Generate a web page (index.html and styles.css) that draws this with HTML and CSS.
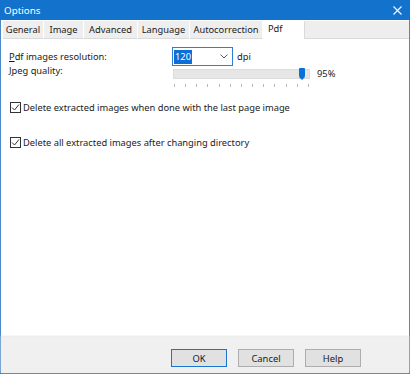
FILE: index.html
```html
<!DOCTYPE html>
<html>
<head>
	<meta charset="UTF-8">
	<title>Options</title>
	<link rel="stylesheet" href="styles.css">
</head>
<body>
	<div class="window">
		<div class="titlebar">
			<span class="title">Options</span>
			<svg class="close" width="9" height="9" viewBox="0 0 9 9"><path d="M0.5 0.5L8.5 8.5M8.5 0.5L0.5 8.5" stroke="#fff" stroke-width="1.1"/></svg>
		</div>
		<div class="tabs">
			<span class="tab t-general">General</span>
			<span class="tab t-image">Image</span>
			<span class="tab t-advanced">Advanced</span>
			<span class="tab t-language">Language</span>
			<span class="tab t-auto">Autocorrection</span>
			<span class="tab selected">Pdf</span>
			<span class="tabfill"></span>
		</div>
		<div class="page">
			<div class="row">
				<span class="label"><u>P</u>df images resolution:</span>
				<span class="combo"><span class="sel">120</span>
					<svg class="chev" width="8" height="5" viewBox="0 0 8 5"><path d="M0.5 0.5L4 4L7.5 0.5" fill="none" stroke="#555" stroke-width="1"/></svg>
				</span>
				<span class="unit">dpi</span>
			</div>
			<div class="row slider-row">
				<span class="label"><u>J</u>peg quality:</span>
				<div class="slider">
					<div class="track"><span class="thumb"></span></div>
					<div class="ticks">
						<i></i><i></i><i></i><i></i><i></i><i></i><i></i><i></i><i></i><i></i><i></i><i></i><i></i>
					</div>
				</div>
				<span class="pct">95%</span>
			</div>
			<label class="check first"><span class="box"><svg width="9" height="9" viewBox="0 0 9 9"><path d="M1 4.5L3.5 7L8 1.5" fill="none" stroke="#333" stroke-width="1"/></svg></span>Delete extracted images when done with the last page image</label>
			<label class="check second"><span class="box"><svg width="9" height="9" viewBox="0 0 9 9"><path d="M1 4.5L3.5 7L8 1.5" fill="none" stroke="#333" stroke-width="1"/></svg></span>Delete all extracted images after changing directory</label>
		</div>
		<div class="footer">
			<button class="btn default">OK</button>
			<button class="btn">Cancel</button>
			<button class="btn">Help</button>
		</div>
	</div>
</body>
</html>
```

FILE: styles.css
```css
html, body {
	margin: 0;
	padding: 0;
	background: #fff;
}
body {
	font-family: "Noto Sans", sans-serif;
	font-size: 9.3px;
	color: #1a1a1a;
}
.window {
	width: 410px;
	height: 374px;
	box-sizing: border-box;
	border: 1px solid #4a88c8;
	border-top: none;
	display: flex;
	flex-direction: column;
}
.titlebar {
	height: 20px;
	margin: 0 -1px;
	background: #1272cc;
	color: #fff;
	display: flex;
	align-items: center;
	justify-content: space-between;
	padding: 0 8px 0 4px;
}
.title {
	font-size: 9.8px;
}
.tabs {
	height: 18px;
	display: flex;
	padding: 1px 0 0 2px;
	background: #fff;
}
.tab {
	background: #eeeeee;
	border-right: 1px solid #fff;
	border-bottom: 1px solid #dadada;
	text-align: center;
	line-height: 17px;
	box-sizing: border-box;
	height: 18px;
}
.t-general { width: 41px; }
.t-image { width: 40px; }
.t-advanced { width: 54px; }
.t-language { width: 52px; }
.t-auto { width: 73px; }
.tab.selected {
	background: #fff;
	border-bottom-color: #fff;
	width: 41px;
	text-align: left;
	padding-left: 5px;
	line-height: 17px;
	margin-top: -1px;
	height: 19px;
}
.tabfill {
	flex: 1;
	background: #eeeeee;
	border-left: 1px solid #dadada;
	border-bottom: 1px solid #dadada;
}
.page {
	flex: 1;
	background: #fff;
	padding: 8px 0 0 8px;
}
.row {
	display: flex;
	align-items: center;
}
.label {
	width: 163px;
}
.combo {
	width: 61px;
	height: 19px;
	box-sizing: border-box;
	border: 1px solid #2b7fd6;
	display: flex;
	align-items: center;
	justify-content: space-between;
	padding: 0 4px 0 1px;
}
.sel {
	background: #0a6fd8;
	color: #fff;
	padding: 0 1px;
	line-height: 14px;
}
.unit {
	margin-left: 4px;
}
.slider-row {
	align-items: flex-start;
	margin-top: 3px;
}
.slider-row .label {
	line-height: 10px;
	margin-top: -3px;
}
.slider {
	width: 137px;
	margin-left: 1px;
}
.track {
	height: 10px;
	background: #e6e6e6;
	border: 1px solid #dcdcdc;
	box-sizing: border-box;
	position: relative;
}
.thumb {
	position: absolute;
	left: 125px;
	top: -2px;
	width: 6px;
	height: 9px;
	background: #0a72d4;
	border-radius: 1px;
}
.thumb::after {
	content: "";
	position: absolute;
	left: 0;
	top: 9px;
	border-left: 3px solid transparent;
	border-right: 3px solid transparent;
	border-top: 3px solid #0a72d4;
}
.ticks {
	display: flex;
	justify-content: space-between;
	padding-left: 1px;
	margin-top: 5px;
	width: 135px;
}
.ticks i {
	width: 1px;
	height: 3px;
	background: #b8b8b8;
}
.pct {
	margin-left: 7px;
	line-height: 10px;
	margin-top: 0;
}
.check {
	display: flex;
	align-items: center;
	height: 12px;
}
.check.first {
	margin-top: 14px;
}
.check.second {
	margin-top: 23px;
}
.box {
	width: 11px;
	height: 11px;
	box-sizing: border-box;
	border: 1px solid #333;
	margin: 0 2px 0 1px;
	display: flex;
	align-items: center;
	justify-content: center;
}
.footer {
	height: 36px;
	box-sizing: border-box;
	background: #f0f0f0;
	box-shadow: 0 -1px 2px #e6e6e6;
	display: flex;
	justify-content: flex-end;
	align-items: flex-start;
	gap: 11px;
	padding: 12px 48px 0 0;
}
.btn {
	width: 56px;
	height: 18px;
	font-family: "Noto Sans", sans-serif;
	font-size: 9.4px;
	color: #1a1a1a;
	background: #e1e1e1;
	border: 1px solid #adadad;
	padding: 0;
	margin: 0;
}
.btn.default {
	border-color: #1a74d2;
}
```
